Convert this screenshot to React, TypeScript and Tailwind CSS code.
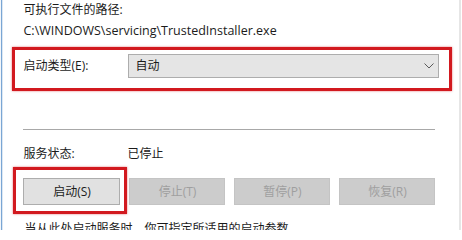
import React from "react";

const font = {
  fontFamily: '"Segoe UI", "Open Sans", "Noto Sans CJK SC", sans-serif',
};

function Btn({ label, enabled }: { label: string; enabled?: boolean }) {
  return enabled ? (
    <div className="w-[97px] h-[27px] flex items-center justify-center bg-[#e1e1e1] border border-[#adadad] text-[#1b1b1b] text-[12px]">
      {label}
    </div>
  ) : (
    <div className="w-[96px] h-[27px] flex items-center justify-center bg-[#cccccc] border border-[#c4c4c4] text-[#9f9f9f] text-[12px]">
      {label}
    </div>
  );
}

export default function App() {
  return (
    <div
      className="w-[462px] h-[230px] bg-white overflow-hidden flex"
      style={font}
    >
      <div className="w-[1px] bg-[#f2f6fa]" />
      <div className="w-[1px] bg-[#7aa6d4]" />
      <div className="w-[1px] bg-[#dde8f3]" />
      <div className="flex-1 pl-[21px] pr-[20px] text-[12px] leading-[16px] text-[#1b1b1b]">
        <div className="pt-[2px]">可执行文件的路径:</div>
        <div className="mt-[5px] text-[12.5px]">C:\WINDOWS\servicing\TrustedInstaller.exe</div>
        <div className="relative mt-[15px] flex items-center h-[24px]">
          <div className="w-[105px]">启动类型(E):</div>
          <div className="w-[311px] h-[24px] bg-[#e5e5e5] border border-[#adadad] flex items-center justify-between pl-[6px] pr-[4px]">
            <span>自动</span>
            <svg width="10" height="6" viewBox="0 0 10 6">
              <path d="M0.5 0.5 L5 5 L9.5 0.5" fill="none" stroke="#5a5a5a" strokeWidth="1" />
            </svg>
          </div>
          <div className="absolute left-[-11px] top-[-7px] right-[-13px] bottom-[-13px] border-[3px] border-[#d2191f] shadow-[0_0_2px_rgba(210,25,31,0.6)]" />
        </div>
        <div className="mt-[51px] h-px bg-[#a8a8a8] w-[412px]" />
        <div className="mt-[16px] flex">
          <div className="w-[104px]">服务状态:</div>
          <div>已停止</div>
        </div>
        <div className="mt-[16px] flex gap-[9px]">
          <div className="relative">
            <Btn label="启动(S)" enabled />
            <div className="absolute left-[-10px] top-[-11px] right-[-7px] bottom-[-9px] border-[3px] border-[#d2191f] shadow-[0_0_2px_rgba(210,25,31,0.6)]" />
          </div>
          <Btn label="停止(T)" />
          <Btn label="暂停(P)" />
          <Btn label="恢复(R)" />
        </div>
        <div className="mt-[16px] pl-[1px]">当从此处启动服务时，你可指定所适用的启动参数。</div>
      </div>
      <div className="w-[2px] bg-[#e6e6e6]" />
      <div className="w-[1px] bg-white" />
    </div>
  );
}
